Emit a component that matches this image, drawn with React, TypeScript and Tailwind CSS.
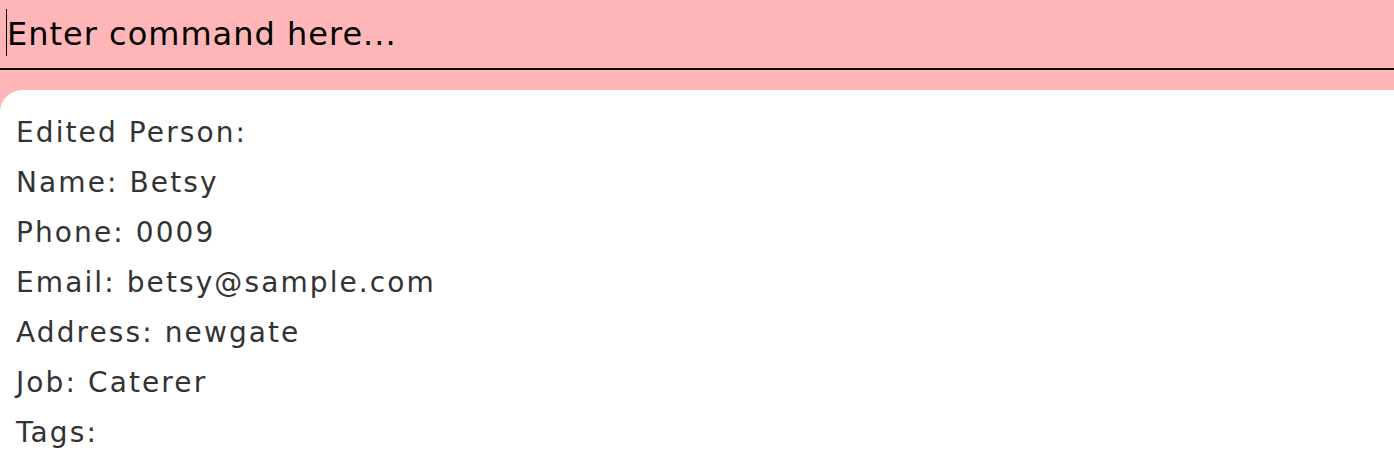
import React from "react";

const lines = [
  "Edited Person:",
  "Name: Betsy",
  "Phone: 0009",
  "Email: betsy@sample.com",
  "Address: newgate",
  "Job: Caterer",
  "Tags:",
];

function App() {
  return (
    <div className="w-[1394px] h-[450px] overflow-hidden bg-[#ffb6b9] flex flex-col font-['DejaVu_Sans',sans-serif]">
      <div className="h-[70px] border-b-2 border-black flex items-center px-[7px] shrink-0">
        <div className="relative flex items-center">
          <span className="absolute -left-px top-[-9px] h-[47px] w-px bg-black" />
          <span className="text-[32px] tracking-[1px] text-black leading-none">Enter command here...</span>
        </div>
      </div>
      <div className="mt-[20px] flex-1 bg-white rounded-tl-[22px] px-[16px] pt-[18px] text-[#333333] text-[28px] tracking-[2.1px] leading-[50px]">
        {lines.map((l) => (
          <div key={l}>{l}</div>
        ))}
      </div>
    </div>
  );
}

export default App;
